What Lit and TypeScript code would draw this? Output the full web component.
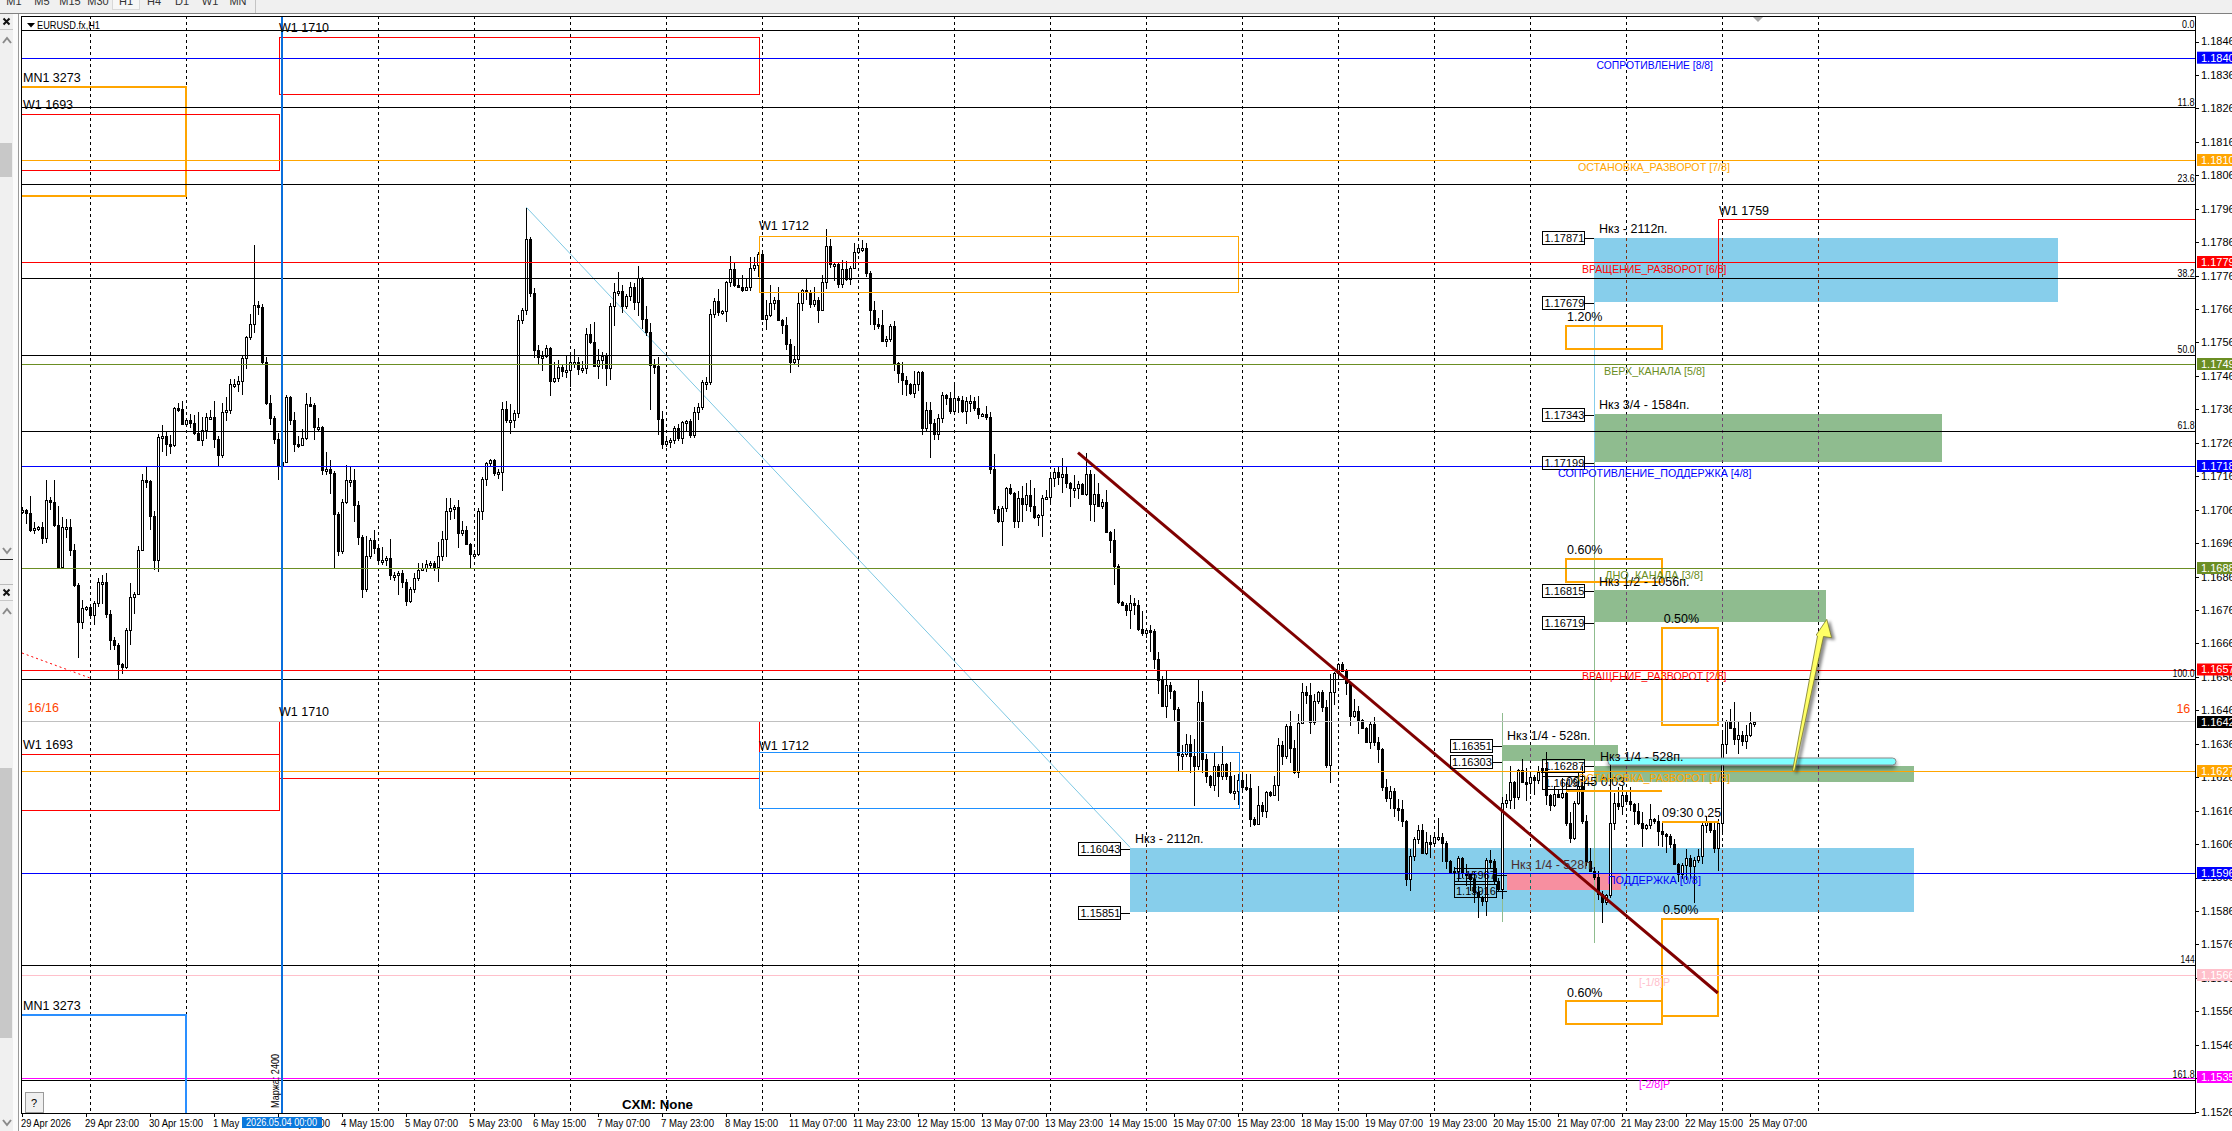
import { LitElement, html, svg, css } from "lit";
import { customElement } from "lit/decorators.js";

const Z8 = [[45,990],[55,1000],[63,1050],[70,1045],[80,1040],[88,1075],[95,960],[103,955],[113,1040],[121,1165],[129,1040],[137,1040],[145,1105],[153,1205],[161,1330],[170,1285],[178,1280],[187,1305],[195,1270],[203,1205],[212,1205],[220,1305],[228,1380],[236,1395],[244,1450],[253,1460],[261,1350],[269,1252],[277,1250],[286,1105],[294,900],[302,900],[310,1000],[319,1145],[327,770],[335,768],[344,795],[352,795],[360,685],[368,685],[377,735],[385,720],[393,730],[402,760],[410,780],[418,750],[426,712],[434,708],[443,780],[451,825],[459,695],[467,692],[475,612],[484,612],[492,602],[500,535],[508,475],[517,430],[525,376],[533,376],[541,500],[543,668],[551,670],[558,715],[566,775],[574,858],[583,845],[591,652],[599,718],[607,792],[615,798],[624,775],[632,672],[640,672],[649,742],[657,742],[665,762],[665,870],[673,865],[682,878],[690,1000],[698,1120],[707,958],[715,900],[723,900],[732,980],[740,1075],[748,1230],[757,1115],[765,1078],[773,1105],[781,1142],[790,1140],[798,1135],[806,1187],[815,1185],[823,1178],[832,1212],[840,1275],[848,1220],[856,1192],[865,1165],[873,1165],[881,1150],[889,1150],[897,1162],[905,1125],[913,1075],[920,995],[929,985],[938,982],[946,1060],[955,1050],[963,1095],[971,1122],[979,1122],[987,995],[995,900],[1004,848],[1012,840],[1020,878],[1029,875],[1037,680],[1045,720],[1053,720],[1061,702],[1069,672],[1069,420],[1077,420],[1085,155],[1095,350],[1103,518],[1111,530],[1119,530],[1127,498],[1136,606],[1144,595],[1152,560],[1160,572],[1168,572],[1176,546],[1185,546],[1193,568],[1201,572],[1210,460],[1218,485],[1226,560],[1235,540],[1243,528],[1251,570],[1259,380],[1267,335],[1276,332],[1284,380],[1292,350],[1301,320],[1309,365],[1317,290],[1325,415],[1333,445],[1341,555],[1350,552],[1358,712],[1366,792],[1375,782],[1383,782],[1391,742],[1399,778],[1408,725],[1416,722],[1424,768],[1432,698],[1441,680],[1449,605],[1457,620],[1465,408],[1473,358],[1482,395],[1490,400],[1498,310],[1506,260],[1515,315],[1523,320],[1531,338],[1539,330],[1548,265],[1556,262]];
const Z6 = [[5,330],[12,335],[20,265],[30,265],[38,170],[47,555],[47,418],[55,410],[63,375],[72,350],[80,420],[88,420],[97,480],[106,545],[115,548],[123,375],[132,330],[140,330],[148,375],[157,355],[166,392],[175,305],[183,195],[192,255],[200,250],[208,315],[217,265],[225,300],[233,272],[241,218],[250,205],[259,200],[267,262],[275,380],[284,432],[292,425],[301,485],[310,480],[318,425],[327,548],[335,575],[343,600],[351,605],[360,645],[370,610],[378,570],[386,750],[395,690],[403,725],[411,768],[420,720],[428,645],[437,650],[445,700],[453,655],[462,655],[470,700],[478,665],[487,660],[495,680],[505,703],[513,703],[522,705],[530,855],[538,980],[547,1025],[556,985],[564,925],[572,925],[581,1030],[589,950],[598,975],[606,940],[615,975],[623,1010],[632,1010],[640,955],[650,950],[658,895],[666,875],[674,892],[683,880],[691,908],[700,925],[708,925],[716,905],[725,950],[733,868],[742,975],[751,940],[760,980],[768,965],[776,1055],[785,1080],[793,1150],[802,1265],[811,1275],[819,1290],[827,1270],[836,1275],[844,1345],[853,1358],[861,1350],[870,1352],[878,1435],[887,1500]];
const Z7 = [118,200,135,150,200,345,345,310,345,390,178,355,405,437,375,410,370,405,455,455,420,440,440,535,555,495,515,455,465,440,312,352,255,320,405,255,155,160,250,185,155,190,385,160,100,72,90,125,230,210,240,260,310,248,305,320,440,475,450,505,505,535,720,650,600,565,640,605,610,590,590,605,660,700,695,650,700,700,715,755,770,790,660,660,720,760,490];
const Z4 = [[133,300],[141,235],[149,305],[157,185],[165,260],[173,245],[181,225],[189,245],[197,205],[205,205],[213,315],[221,315],[229,270],[237,300],[245,270],[253,415],[261,415],[269,255],[277,260],[285,420],[293,520],[301,510],[309,545],[317,605],[325,605],[333,570],[341,220],[349,380],[357,270],[365,295],[373,310],[381,315],[389,350],[397,390],[405,375],[413,375],[421,340],[429,390],[437,395],[445,410],[453,405],[461,470],[469,520],[477,525],[485,445],[493,520],[501,460],[509,515],[517,380],[525,365],[533,370],[541,435],[549,460],[557,160],[565,60],[573,70],[581,125],[589,100],[597,125],[605,115],[613,70],[621,65]];

const pts: number[][] = [
  ...Z8.map(([a, b]) => [a / 2.063, 180 + b / 3]),
  ...Z6.map(([a, b]) => [740 + a / 2.119, 180 + b / 3]),
  ...Z7.map((b, i) => [1158.3 + 4 * i, 640 + b / 3]),
  ...Z4.map(([a, b]) => [1440 + a / 1.98, 700 + b / 3]),
].sort((a, b) => a[0] - b[0]);

function closeAt(x: number) {
  for (let i = 1; i < pts.length; i++) {
    if (pts[i][0] >= x) {
      const [x0, y0] = pts[i - 1];
      const [x1, y1] = pts[i];
      if (x1 === x0) return y1;
      return y0 + ((y1 - y0) * (x - x0)) / (x1 - x0);
    }
  }
  return pts[pts.length - 1][1];
}

const SPIKES: [number, "h" | "l", number][] = [
  [254.5, "h", 245], [526, "h", 208], [78.5, "l", 658], [118, "l", 679], [334, "l", 568], [650, "l", 410],
  [930.6, "l", 457.7], [1002, "l", 545.7], [1194, "l", 805.7], [1198, "h", 679], [1410, "l", 890.7],
  [1478, "l", 918], [1602.6, "l", 923], [1610.7, "h", 763], [1695, "l", 902.7], [1718, "l", 870.7], [1734, "h", 701.7],
];

function candlePaths() {
  let seed = 12345;
  const rnd = () => ((seed = (seed * 16807) % 2147483647) / 2147483647);
  let wick = "", white = "", black = "";
  let prev = closeAt(22);
  for (let cx = 22; cx <= 1754; cx += 4) {
    const c = Math.round(closeAt(cx + 0.5));
    const o = Math.round(prev);
    let top = Math.min(o, c), bot = Math.max(o, c);
    if (bot - top < 2) bot = top + 2;
    let hi = top - Math.round(rnd() * rnd() * 22) - 1;
    let lo = bot + Math.round(rnd() * rnd() * 22) + 1;
    for (const [sx, k, v] of SPIKES) {
      if (Math.abs(sx - cx) < 2.6) {
        if (k === "h") hi = Math.min(hi, v);
        else lo = Math.max(lo, v);
      }
    }
    const lx = cx + 0.5;
    wick += `M${lx} ${hi}V${lo}`;
    const body = `M${cx - 1 + 0.5} ${top + 0.5}h2v${bot - top}h-2z`;
    if (c <= o) white += body;
    else black += body;
    prev = c;
  }
  return { wick, white, black };
}
const CANDLES = candlePaths();

const GRID = Array.from({ length: 19 }, (_, k) => 90.5 + 96 * k);
const FILLS: [number, number, number, number, string, string][] = [
  [1594, 238, 2058, 302, "#87ceeb", "#783114"],
  [1594, 414, 1942, 462, "#8fbc8f", "#704370"],
  [1594, 590, 1826, 622, "#8fbc8f", "#704370"],
  [1502, 745, 1618, 761, "#8fbc8f", "#704370"],
  [1594, 766, 1914, 782, "#8fbc8f", "#704370"],
  [1130, 848, 1914, 912, "#87ceeb", "#783114"],
  [1507, 874, 1621, 890, "#f78fa0", "#087060"],
];
const HLINES: [number, string][] = [
  [30, "#000"], [58, "#00f"], [107, "#000"], [160, "#ffa500"], [184, "#000"], [262, "#f00"], [278, "#000"],
  [355, "#000"], [364, "#6b8e23"], [431, "#000"], [466, "#00f"], [568, "#6b8e23"], [670, "#f00"], [679, "#000"],
  [721, "#c0c0c0"], [771, "#ffa500"], [873, "#00f"], [965, "#000"], [975, "#ffc0cb"], [1078, "#f0f"], [1080, "#000"],
];
const OUTLINES: [number, number, number, number, string, number][] = [
  [279, 37, 759, 94, "#f00", 1],
  [10, 87, 186, 196, "#ffa500", 2],
  [10, 114, 279, 170, "#f00", 1],
  [10, 754, 279, 810, "#f00", 1],
  [279, 721, 759, 778, "#f00", 1],
  [759, 236, 1238, 292, "#ffa500", 1],
  [759, 752, 1239, 808, "#1e90ff", 1],
  [1566, 326, 1662, 349, "#ffa500", 2],
  [1566, 559, 1662, 582, "#ffa500", 2],
  [1662, 628, 1718, 725, "#ffa500", 2],
  [1662, 919, 1718, 1016, "#ffa500", 2],
  [1566, 1001, 1662, 1024, "#ffa500", 2],
];
const BOXES: [number, number, string, number][] = [
  [1542.5, 238, "1.17871", 1594], [1542.5, 302.7, "1.17679", 1594], [1542.5, 414.7, "1.17343", 1594],
  [1542.5, 462.7, "1.17199", 1594], [1542.5, 590.7, "1.16815", 1594], [1542.5, 623, "1.16719", 1594],
  [1450, 746, "1.16351", 1502], [1450, 762, "1.16303", 1502], [1542.5, 766, "1.16287", 1594], [1542.5, 783, "1.16191", 1594],
  [1078.5, 849, "1.16043", 1130], [1078.5, 913, "1.15851", 1130], [1454, 875, "1.15967", 1507], [1454, 891, "1.15916", 1507],
];
const LABELS: [number, number, string, string, number, number?][] = [
  [279, 27, "W1 1710", "#000", 12.5], [23, 77, "MN1 3273", "#000", 12.5], [23, 104, "W1 1693", "#000", 12.5],
  [759, 225, "W1 1712", "#000", 12.5], [1719, 210, "W1 1759", "#000", 12.5], [279, 711.5, "W1 1710", "#000", 12.5],
  [23, 744.6, "W1 1693", "#000", 12.5], [759, 745, "W1 1712", "#000", 12.5], [23, 1005.7, "MN1 3273", "#000", 12.5],
  [27.6, 707.5, "16/16", "#ff4500", 12.5], [2176.4, 708, "16", "#ff4500", 12.5],
  [1599, 228.7, "Нкз - 2112п.", "#000", 12.5], [1567, 316.7, "1.20%", "#000", 12.5], [1599, 404.7, "Нкз 3/4 - 1584п.", "#000", 12.5],
  [1567, 549.7, "0.60%", "#000", 12.5], [1599, 581, "Нкз 1/2 - 1056п.", "#000", 12.5], [1663.7, 618.7, "0.50%", "#000", 12.5],
  [1507, 735.7, "Нкз 1/4 - 528п.", "#000", 12.5], [1600, 756.7, "Нкз 1/4 - 528п.", "#000", 12.5],
  [1566, 781.7, "09:45 0.03", "#000", 12.5], [1662, 812.7, "09:30 0.25", "#000", 12.5],
  [1135, 838.7, "Нкз - 2112п.", "#000", 12.5], [1511, 864.3, "Нкз 1/4 - 528п.", "#4a2d2d", 12.5],
  [1663, 909.3, "0.50%", "#000", 12.5], [1567, 992, "0.60%", "#000", 12.5],
  [1596.5, 65.3, "СОПРОТИВЛЕНИЕ [8/8]", "#00f", 11, 116.5], [1578, 167.3, "ОСТАНОВКА_РАЗВОРОТ [7/8]", "#ffa500", 11, 152],
  [1582, 269.3, "ВРАЩЕНИЕ_РАЗВОРОТ [6/8]", "#f00", 11, 144.5], [1604, 371, "ВЕРХ_КАНАЛА [5/8]", "#6b8e23", 11, 101],
  [1558, 473.3, "СОПРОТИВЛЕНИЕ_ПОДДЕРЖКА [4/8]", "#00f", 11, 193.5], [1605, 575, "ДНО_КАНАЛА [3/8]", "#6b8e23", 11, 98],
  [1582, 676, "ВРАЩЕНИЕ_РАЗВОРОТ [2/8]", "#f00", 11, 144.5], [1578, 778.3, "ОСТАНОВКА_РАЗВОРОТ [1/8]", "#ffa500", 11, 152],
  [1607.7, 880.3, "ПОДДЕРЖКА [0/8]", "#00f", 11, 93.3], [1639, 982.3, "[-1/8]P", "#ffc0cb", 11, 31], [1639, 1084.3, "[-2/8]P", "#f0f", 11, 31],
];
const FIBS: [number, string, number][] = [
  [24.7, "0.0", 12.5], [102, "11.8", 17], [178.7, "23.6", 17], [273, "38.2", 17], [349.7, "50.0", 17], [425.7, "61.8", 17],
  [673.7, "100.0", 22], [959.3, "144", 14], [1074.7, "161.8", 22],
];
const TAGS: [number, string, string][] = [
  [57.7, "1.18408", "#00f"], [160, "1.18103", "#ffa500"], [262, "1.17798", "#f00"], [364, "1.17493", "#6b8e23"],
  [466, "1.17188", "#00f"], [568, "1.16883", "#6b8e23"], [669.5, "1.16577", "#f00"], [722, "1.16423", "#000"],
  [771, "1.16272", "#ffa500"], [873, "1.15967", "#00f"], [975, "1.15662", "#ffc0cb"], [1077, "1.15358", "#f0f"],
];
const TIMES = ["29 Apr 2026","29 Apr 23:00","30 Apr 15:00","1 May 07:00","1 May 23:00","4 May 15:00","5 May 07:00","5 May 23:00","6 May 15:00","7 May 07:00","7 May 23:00","8 May 15:00","11 May 07:00","11 May 23:00","12 May 15:00","13 May 07:00","13 May 23:00","14 May 15:00","15 May 07:00","15 May 23:00","18 May 15:00","19 May 07:00","19 May 23:00","20 May 15:00","21 May 07:00","21 May 23:00","22 May 15:00","25 May 07:00"];
const timeW = (s: string) => (s.endsWith("2026") ? 50 : s.includes("Apr") ? 54 : s.length >= 12 ? 58 : 53);

const label = (x: number, yc: number, s: string, fill: string, size: number, w?: number) =>
  w
    ? svg`<text x=${x} y=${yc + size * 0.36} fill=${fill} font-size=${size} textLength=${w} lengthAdjust="spacingAndGlyphs">${s}</text>`
    : svg`<text x=${x} y=${yc + size * 0.36} fill=${fill} font-size=${size}>${s}</text>`;

const TIMEFRAMES = ["M1", "M5", "M15", "M30", "H1", "H4", "D1", "W1", "MN"];

const chevUp = html`<svg class="chev" viewBox="0 0 10 8"><path d="M1 7l4-5 4 5" /></svg>`;
const chevDown = html`<svg class="chev" viewBox="0 0 10 8"><path d="M1 1l4 5 4-5" /></svg>`;
const cross = html`<svg class="cross" viewBox="0 0 9 9"><path d="M1.5 1.5l6 6M7.5 1.5l-6 6" /></svg>`;

@customElement("app-root")
export class AppRoot extends LitElement {
  static styles = css`
    :host { display: block; width: 2232px; height: 1131px; overflow: hidden; background: #fff; font-family: "Liberation Sans", Arial, sans-serif; }
    .toolbar { height: 13px; box-sizing: content-box; border-bottom: 1px solid #808080; background: #f0f0f0; display: flex; overflow: hidden; }
    .tf { width: 28px; height: 6px; margin-top: -4px; padding-top: 0; font-size: 11px; line-height: 11px; height: 14px; text-align: center; color: #333; flex: none; box-sizing: border-box; }
    .tf.on { background: #f7f7f7; border-left: 1px solid #d8d8d8; border-right: 1px solid #d8d8d8; border-bottom: 1px solid #d8d8d8; }
    .tf-sep { width: 1px; height: 13px; background: #c4c4c4; margin-left: 3px; }
    .main { display: flex; height: 1117px; }
    .strip { width: 18px; flex: none; background: #fbfbfb; border-right: 1px solid #9a9a9a; display: flex; flex-direction: column; }
    .pane { width: 13px; background: #f0f0f0; display: flex; flex-direction: column; align-items: stretch; }
    .pane.a { height: 545px; }
    .pane.b { height: 547px; border-top: 1px solid #bbb; box-sizing: border-box; }
    .gap { height: 25px; width: 13px; background: #f0f0f0; border-top: 1px solid #222; box-sizing: border-box; }
    .btn { height: 15px; display: flex; align-items: center; justify-content: center; border-bottom: 1px solid #c8c8c8; }
    .up { height: 19px; display: flex; align-items: center; justify-content: center; }
    .down { height: 17px; display: flex; align-items: center; justify-content: center; }
    .track { flex: 1; }
    .thumb { width: 12px; background: #c8c8c8; }
    .a .thumb { margin-top: 94px; height: 34px; }
    .b .thumb { margin-top: 148px; height: 270px; }
    .chev { width: 10px; height: 8px; fill: none; stroke: #8a8a8a; stroke-width: 2; }
    .cross { width: 9px; height: 9px; fill: none; stroke: #111; stroke-width: 2; }
    .chart { display: block; flex: none; }
    text { font-family: "Liberation Sans", Arial, sans-serif; }
    .crisp { shape-rendering: crispEdges; }
    .bold { font-weight: 700; }
    .arrow { filter: drop-shadow(3px 2px 1.5px rgba(0, 0, 0, 0.45)); }
    .pill { filter: drop-shadow(0 3px 2px rgba(0, 0, 0, 0.5)); }
  `;

  render() {
    return html`
      <div class="toolbar">
        ${TIMEFRAMES.map((t) => html`<div class="tf ${t === "H1" ? "on" : ""}">${t}</div>`)}
        <div class="tf-sep"></div>
      </div>
      <div class="main">
        <div class="strip">
          <div class="pane a">
            <div class="btn">${cross}</div>
            <div class="up">${chevUp}</div>
            <div class="track"><div class="thumb"></div></div>
            <div class="down">${chevDown}</div>
          </div>
          <div class="gap"></div>
          <div class="pane b">
            <div class="btn">${cross}</div>
            <div class="up">${chevUp}</div>
            <div class="track"><div class="thumb"></div></div>
            <div class="down">${chevDown}</div>
          </div>
        </div>
        <svg class="chart" width="2213" height="1117" viewBox="19 14 2213 1117">
          <defs>
            <clipPath id="plot"><rect x="21" y="16" width="2175" height="1097"></rect></clipPath>
          </defs>
          <g clip-path="url(#plot)">
            <g class="crisp">
              ${GRID.map((x) => svg`<line x1=${x} x2=${x} y1="16" y2="1113" stroke="#000" stroke-dasharray="3 3"></line>`)}
              ${FILLS.map(([a, b, c, d, f, inv]) => svg`
                <rect x=${a} y=${b} width=${c - a} height=${d - b} fill=${f}></rect>
                ${GRID.filter((x) => x > a && x < c).map((x) => svg`<line x1=${x} x2=${x} y1=${b} y2=${d} stroke=${inv} stroke-dasharray="3 3" stroke-dashoffset=${b - 16}></line>`)}
              `)}
            </g>
            <line x1="1594.5" x2="1594.5" y1="302" y2="462" stroke="#87ceeb" class="crisp"></line>
            <line x1="1594.5" x2="1594.5" y1="462" y2="943" stroke="#8fbc8f" class="crisp"></line>
            <line x1="1502.5" x2="1502.5" y1="713" y2="922" stroke="#8fbc8f" class="crisp"></line>
            <line x1="526.4" y1="207.3" x2="1130" y2="847.3" stroke="#7ec8e3" stroke-width="1"></line>
            <g class="crisp">
              <path d=${CANDLES.wick} stroke="#000" fill="none"></path>
              <path d=${CANDLES.white} stroke="#000" fill="#fff"></path>
              <path d=${CANDLES.black} stroke="#000" fill="#000"></path>
            </g>
            <line x1="22" y1="653" x2="90" y2="678" stroke="#f00" stroke-dasharray="2 3"></line>
            <g class="crisp">
              ${OUTLINES.map(([a, b, c, d, col, w]) => svg`<rect x=${a + (w === 1 ? 0.5 : 0)} y=${b + (w === 1 ? 0.5 : 0)} width=${c - a} height=${d - b} fill="none" stroke=${col} stroke-width=${w}></rect>`)}
              ${HLINES.map(([y, col]) => svg`<line x1="21" x2="2196" y1=${y + 0.5} y2=${y + 0.5} stroke=${col}></line>`)}
              <path d="M1718.5 278V219.5H2196" fill="none" stroke="#f00"></path>
              <path d="M21 1015H186V1113" fill="none" stroke="#2a8fff" stroke-width="2"></path>
              <line x1="282" x2="282" y1="16" y2="1113" stroke="#0a6fdc" stroke-width="2.4"></line>
              <line x1="1566" x2="1662" y1="791" y2="791" stroke="#ffa500" stroke-width="2"></line>
              <line x1="1662" x2="1719" y1="822" y2="822" stroke="#ffa500" stroke-width="2"></line>
            </g>
            <line x1="1078" y1="452.7" x2="1717.8" y2="993" stroke="#800000" stroke-width="3"></line>
            <rect class="pill" x="1608" y="758" width="288" height="7" rx="3.5" fill="#7fffff" stroke="#8a8a8a"></rect>
            <polygon class="arrow" points="1792.5,770.7 1817.5,636 1816.2,635 1826.8,619.3 1831.6,637.7 1823.5,636.5 1794.5,771" fill="#ffff66" stroke="#77772a" stroke-width="0.8"></polygon>
            <polygon points="1752,16 1764,16 1758,22" fill="#aaa"></polygon>
            <g class="crisp">
              ${BOXES.map(([x, y, , end]) => svg`
                <rect x=${x} y=${Math.round(y) - 6.5} width="42" height="13" fill="none" stroke="#000"></rect>
                <line x1=${x + 42} x2=${end} y1=${Math.round(y) + 0.5} y2=${Math.round(y) + 0.5} stroke="#000"></line>
              `)}
            </g>
            ${BOXES.map(([x, y, s]) => label(x + 2, y, s, "#000", 11))}
            ${LABELS.map(([x, y, s, c, z, w]) => label(x, y, s, c, z, w))}
            ${FIBS.map(([y, s, w]) => label(2194.6 - w, y, s, "#000", 10.5, w))}
            <path d="M27 23h8l-4 4.5z" fill="#000"></path>
            ${label(37, 24.7, "EURUSD.fx,H1", "#000", 11, 63)}
            <text class="bold" x="622" y="1109" font-size="13" textLength="71" lengthAdjust="spacingAndGlyphs" fill="#000">CXM: None</text>
            <text transform="translate(279 1108) rotate(-90)" x="0" y="0" font-size="11" textLength="54" lengthAdjust="spacingAndGlyphs" fill="#000">Маржа: 2400</text>
            <rect x="25.5" y="1092.5" width="18" height="20" fill="#f0f0f0" stroke="#9a9a9a"></rect>
            ${label(31, 1103, "?", "#000", 11)}
          </g>
          <g class="crisp" stroke="#000">
            <path d="M21.5 16V1113.5H2195.5V16H21.5" fill="none"></path>
            ${Array.from({ length: 33 }, (_, i) => svg`<line x1="2196" x2="2199" y1=${Math.round(41.5 + i * 33.44) + 0.5} y2=${Math.round(41.5 + i * 33.44) + 0.5}></line>`)}
            ${TIMES.map((_, k) => svg`<line x1=${Math.round(21.8 + 64 * k) + 0.5} x2=${Math.round(21.8 + 64 * k) + 0.5} y1="1113" y2="1117"></line>`)}
          </g>
          ${Array.from({ length: 33 }, (_, i) => label(2201, 41.5 + i * 33.44, (1.1846 - i * 0.001).toFixed(5), "#000", 11))}
          ${TIMES.map((s, k) => label(21 + 64 * k, 1122.7, s, "#000", 11, timeW(s)))}
          <rect x="242" y="1117" width="80" height="11" fill="#0a78dc"></rect>
          ${label(246, 1122.5, "2026.05.04 00:00", "#fff", 11, 71)}
          ${TAGS.map(([y, s, c]) => svg`
            <rect x="2197" y=${y - 6} width="36" height="12" fill=${c}></rect>
            ${label(2201, y, s, "#fff", 11)}
          `)}
        </svg>
      </div>
    `;
  }
}
